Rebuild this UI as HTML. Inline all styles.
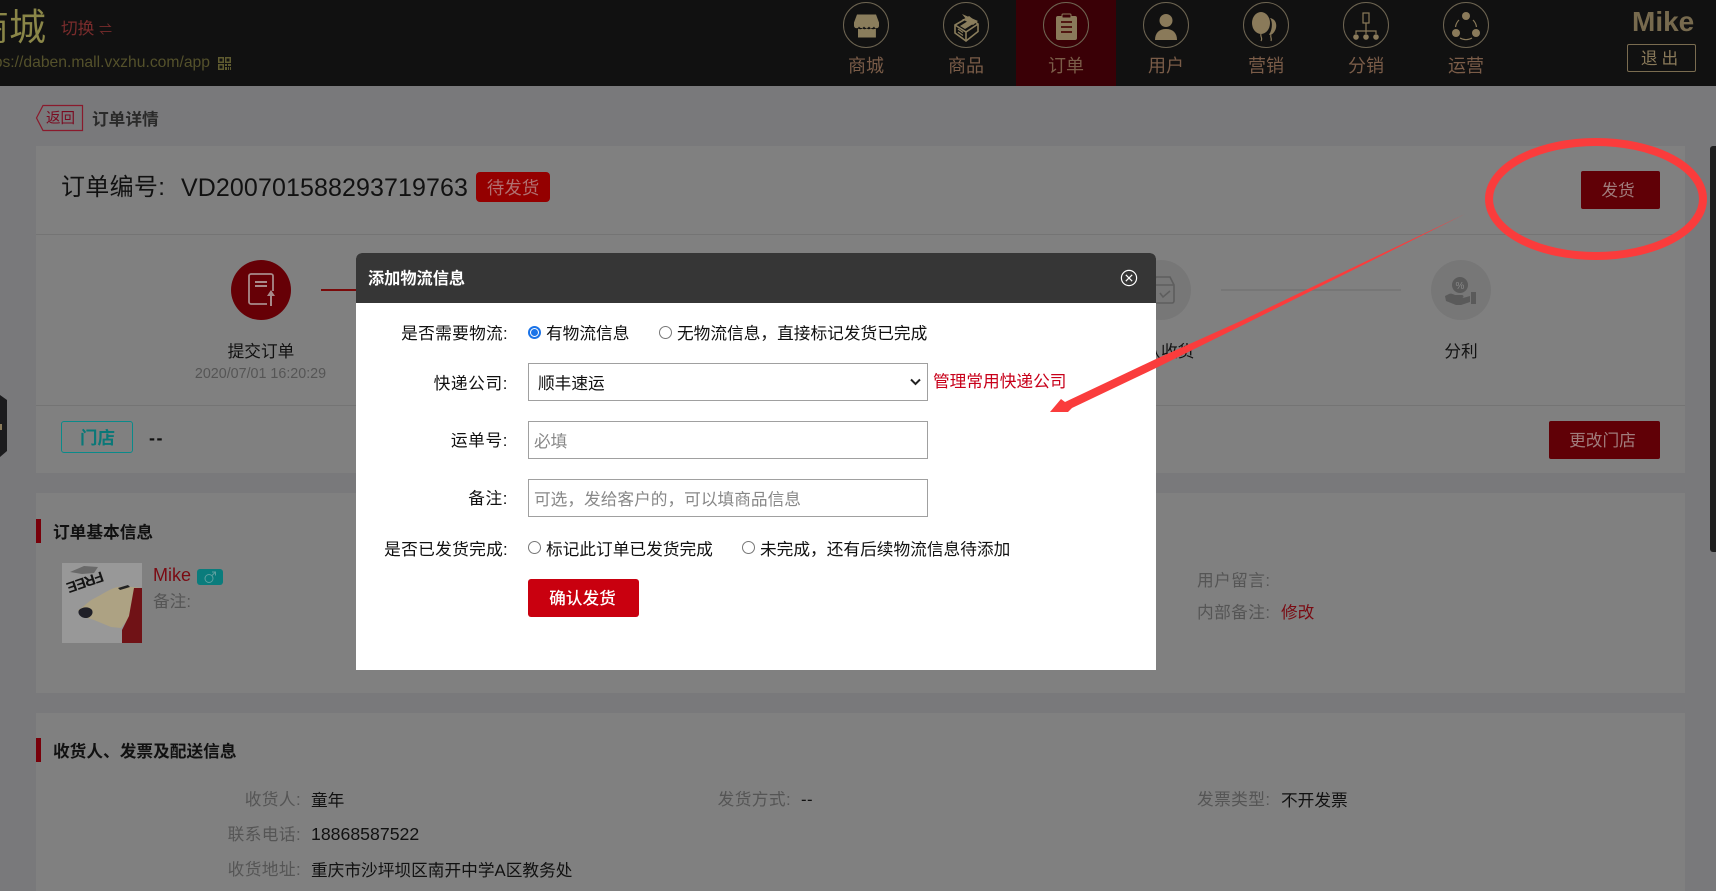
<!DOCTYPE html>
<html lang="zh-CN">
<head>
<meta charset="utf-8">
<title>订单详情</title>
<style>
html,body{margin:0;padding:0;width:1716px;height:891px;overflow:hidden;background:#79797b}
body{position:relative;font-family:"Liberation Sans","Noto Sans CJK SC",sans-serif;font-size:16.7px;color:#111}
.a{position:absolute}
.t{position:absolute;white-space:nowrap;height:24px;line-height:24px;margin-top:1px}
.c{transform:translateX(-50%);text-align:center}
.r{text-align:right}
.lab{color:#555;letter-spacing:.4px}
.nav{position:absolute;top:2px;width:46px;height:46px}
.navt{position:absolute;top:54px;width:100px;height:24px;line-height:24px;text-align:center;font-size:18px;color:#7a5c48}
.card{position:absolute;left:36px;width:1649px;background:#808080}
.btn{position:absolute;background:#600006;color:#a07c7c;border-radius:2px;text-align:center;text-indent:-5px}
.input{position:absolute;left:528px;width:398px;height:36px;border:1px solid #a0a0a0;background:#fff;box-sizing:content-box}
.radio{position:absolute;width:11px;height:11px;border:1px solid #777;border-radius:50%;background:#fff}
</style>
</head>
<body>

<!-- header -->
<div class="a" style="left:0;top:0;width:1716px;height:86px;background:#111"></div>
<div class="t" style="left:-1px;top:2px;height:50px;line-height:50px;font-size:37px;color:#8a8648;width:47px;overflow:hidden;direction:rtl">商城</div>
<div class="t" style="left:61px;top:16px;font-size:16.7px;color:#7a2c2c">切换 <span style="font-size:13px;letter-spacing:-1px">⇌</span></div>
<div class="t" style="right:1506px;top:50px;font-size:15.700px;color:#54512b">https://daben.mall.vxzhu.com/app</div>
<svg class="a" style="left:218px;top:57px" width="13" height="13" viewBox="0 0 13 13" fill="#5f5b30"><path d="M0 0h6v6H0zM1.500 1.500v3h3v-3zM7 0h6v6H7zM8.500 1.500v3h3v-3zM0 7h6v6H0zM1.500 8.500v3h3v-3zM7 7h2v2H7zM10 7h3v2h-3zM7 10h2v3H7zM10 10h1v3h-1zM12 10h1v3h-1z" fill-rule="evenodd"/></svg>

<div class="a" style="left:1016px;top:0;width:100px;height:86px;background:#3a0006"></div>

<svg class="nav" style="left:843px" viewBox="0 0 46 46"><circle cx="23" cy="23" r="22.500" fill="none" stroke="#6e6552"/><g fill="#8a7d5c"><path d="M14 12.500h19l3 8v3.500a2.600 2.600 0 0 1-5 .5 2.800 2.800 0 0 1-5 0 2.800 2.800 0 0 1-5 0 2.800 2.800 0 0 1-5 0 2.600 2.600 0 0 1-5-.5v-3.500z"/><path d="M15 26.500c1.500 1 3.500 1 4.500-.2 1.200 1.300 3 1.300 4.200 0 1.200 1.300 3 1.300 4.200 0 1 1.200 3 1.200 5 .2V35.500H15z"/></g></svg>
<svg class="nav" style="left:943px" viewBox="0 0 46 46"><circle cx="23" cy="23" r="22.500" fill="none" stroke="#6e6552"/><g fill="none" stroke="#8a7d5c" stroke-width="1.600"><path d="M12 23l14-8 9 7v7.500L23 39l-11-8z"/><path d="M12 23l11 7 12-8M23 30v9"/><path d="M15 27l5 3.500M15 30l5 3.500M15 33l5 3.500" stroke-width="1.200"/></g><path d="M19 12l16 7-5 4-11-6 4 0z" fill="#8a7d5c"/><path d="M17 24l8-5 5 3-8 5z" fill="#8a7d5c"/></svg>
<svg class="nav" style="left:1043px" viewBox="0 0 46 46"><circle cx="23" cy="23" r="22.500" fill="none" stroke="#6e6552"/><rect x="13" y="14" width="21" height="24" rx="2" fill="#8a7a5a"/><rect x="19" y="12" width="9" height="4" rx="1" fill="#3a0006" stroke="#8a7a5a"/><path d="M18 20h11M18 25h11M18 30h11" stroke="#4a0a08" stroke-width="1.800"/></svg>
<svg class="nav" style="left:1143px" viewBox="0 0 46 46"><circle cx="23" cy="23" r="22.500" fill="none" stroke="#6e6552"/><g fill="#8a7a5a"><ellipse cx="23" cy="18.500" rx="6.500" ry="6.500"/><path d="M12 38c0-7 4-11 11-11s11 4 11 11z"/></g></svg>
<svg class="nav" style="left:1243px" viewBox="0 0 46 46"><circle cx="23" cy="23" r="22.500" fill="none" stroke="#6e6552"/><g fill="#8a7a5a"><ellipse cx="18" cy="21" rx="9" ry="11"/><path d="M27 16c5 1 7 5 6 10-1 4-4 7-6 7-1 0-1-1 0-2 2-4 3-11 0-15z"/></g><path d="M18 32c-1 3 2 4 0 7M28 33c-1 2 1 3 0 6" fill="none" stroke="#8a7a5a" stroke-width="1.200"/></svg>
<svg class="nav" style="left:1343px" viewBox="0 0 46 46"><circle cx="23" cy="23" r="22.500" fill="none" stroke="#6e6552"/><g fill="none" stroke="#8a7a5a" stroke-width="1.200"><rect x="20" y="11" width="6" height="10"/><path d="M23 21v6M13 32v-3h20v3M23 27v5"/></g><g fill="#8a7a5a"><circle cx="13" cy="35" r="2.800"/><circle cx="23" cy="35" r="2.800"/><circle cx="33" cy="35" r="2.800"/></g></svg>
<svg class="nav" style="left:1443px" viewBox="0 0 46 46"><circle cx="23" cy="23" r="22.500" fill="none" stroke="#6e6552"/><g fill="#8a7a5a"><circle cx="23" cy="14" r="4"/><circle cx="13" cy="31" r="4"/><circle cx="33" cy="31" r="4"/></g><path d="M16 18a12 12 0 0 0-3.500 7M30 18a12 12 0 0 1 3.500 7M17 36a12 12 0 0 0 12 0" fill="none" stroke="#8a7a5a" stroke-width="1.200"/></svg>

<div class="navt" style="left:816px">商城</div>
<div class="navt" style="left:916px">商品</div>
<div class="navt" style="left:1016px">订单</div>
<div class="navt" style="left:1116px">用户</div>
<div class="navt" style="left:1216px">营销</div>
<div class="navt" style="left:1316px">分销</div>
<div class="navt" style="left:1416px">运营</div>

<div class="t" style="left:1632px;top:6px;height:30px;line-height:30px;font-size:28px;font-weight:bold;color:#776a4e">Mike</div>
<div class="a" style="left:1627px;top:44px;width:67px;height:26px;border:1px solid #7a6c50;border-radius:2px;text-align:center;line-height:27px;color:#8a7a5a;font-size:16.7px;letter-spacing:4px">退出</div>

<!-- page header -->
<svg class="a" style="left:35px;top:104px" width="50" height="28" viewBox="0 0 50 28"><path d="M8 1.500H47.500V26.500H8L1.500 14z" fill="none" stroke="#8a1a2c" stroke-width="1.200"/></svg>
<div class="t" style="left:46px;top:106px;font-size:14.500px;color:#7a0a20">返回</div>
<div class="t" style="left:92px;top:107px;font-size:16.700px;font-weight:bold;color:#2a2a2a">订单详情</div>

<!-- card 1 -->
<div class="card" style="top:146px;height:327px"></div>
<div class="a" style="left:36px;top:234px;width:1649px;height:1px;background:#747474"></div>
<div class="a" style="left:36px;top:405px;width:1649px;height:1px;background:#747474"></div>
<div class="t" style="left:61px;top:172px;height:30px;line-height:30px;font-size:24px;letter-spacing:.3px;color:#111">订单编号:</div>
<div class="t" style="left:181px;top:172px;height:30px;line-height:30px;font-size:25px;letter-spacing:.1px;color:#111">VD200701588293719763</div>
<div class="a" style="left:476px;top:172px;width:74px;height:30px;line-height:32px;background:#940000;border-radius:4px;text-align:center;font-size:17.500px;color:#b07070">待发货</div>
<div class="btn" style="left:1581px;top:171px;width:79px;height:38px;line-height:40px;font-size:16.700px">发货</div>
<div class="btn" style="left:1549px;top:421px;width:111px;height:38px;line-height:40px;font-size:16.700px;text-indent:-4px">更改门店</div>

<!-- steps -->
<div class="a" style="left:231px;top:260px;width:60px;height:60px;border-radius:50%;background:#660006"></div>
<svg class="a" style="left:247px;top:273px" width="30" height="34" viewBox="0 0 30 34" fill="none" stroke="#a88a8a" stroke-width="1.800"><path d="M26 18V3a2 2 0 0 0-2-2H4a2 2 0 0 0-2 2v26a2 2 0 0 0 2 2h16"/><path d="M8 9h12M8 13h12" stroke-width="2"/><path d="M24 33V21" stroke-width="2"/><path d="M24 17l-4 6h8z" fill="#a88a8a" stroke="none"/></svg>
<div class="a" style="left:321px;top:289px;width:37px;height:2px;background:#7a0a0a"></div>
<div class="t c" style="left:261px;top:339px">提交订单</div>
<div class="t c" style="left:260.500px;top:361px;font-size:14.300px;color:#555">2020/07/01 16:20:29</div>

<div class="a" style="left:1131px;top:260px;width:60px;height:60px;border-radius:50%;background:#777"></div>
<svg class="a" style="left:1150px;top:275px" width="26" height="30" viewBox="0 0 26 30" fill="none" stroke="#5e5e5e" stroke-width="1.600"><path d="M2 10l4-8h14l4 8v16a2 2 0 0 1-2 2H4a2 2 0 0 1-2-2zM2 10h22"/><path d="M10 18l3 4 7-6" stroke-width="1.600"/></svg>
<div class="a" style="left:1221px;top:289px;width:180px;height:2px;background:#767676"></div>
<div class="t c" style="left:1161px;top:339px">确认收货</div>
<div class="a" style="left:1431px;top:260px;width:60px;height:60px;border-radius:50%;background:#777"></div>
<svg class="a" style="left:1444px;top:276px" width="34" height="30" viewBox="0 0 34 30"><circle cx="16" cy="9" r="8" fill="#5a5a5a"/><text x="16" y="13" font-size="10" text-anchor="middle" fill="#888" font-family="Liberation Sans">%</text><path d="M1 20l4-2c2-1 4 0 6 1h7c2 0 2 3 0 3h-6 7l7-2v6l-9 3H12L2 25z" fill="#5a5a5a"/><rect x="27" y="16" width="5" height="12" fill="#5a5a5a"/></svg>
<div class="t c" style="left:1461px;top:339px">分利</div>

<div class="a" style="left:61px;top:421px;width:70px;height:30px;border:1px solid #0a8a8a;border-radius:3px"></div>
<div class="t" style="left:80px;top:425px;font-size:17.500px;font-weight:bold;color:#0a7878">门店</div>
<div class="t" style="left:149px;top:425px;font-size:18px;color:#111;letter-spacing:1.500px;font-weight:bold">--</div>

<!-- card 2 -->
<div class="card" style="top:493px;height:200px"></div>
<div class="a" style="left:36px;top:519px;width:5px;height:24px;background:#78000a"></div>
<div class="t" style="left:53px;top:520px;font-weight:bold">订单基本信息</div>
<svg class="a" style="left:62px;top:563px" width="80" height="80" viewBox="0 0 80 80">
<rect width="80" height="80" fill="#989898"/>
<text transform="translate(23 19) rotate(161)" x="0" y="5" text-anchor="middle" font-family="Liberation Sans" font-size="15" font-weight="bold" fill="#151515" textLength="38">FREE</text>
<path d="M8 9l14-6 14 1-4 6-12 1z" fill="#444" opacity=".55"/>
<path d="M16 47c5-2 10-9 17-12 8-4 16-10 23-11 8-1 14 0 23 1v15L59 65l-10-1-17-7-12-4z" fill="#ada283"/>
<path d="M17 47c3-3 10-4 13 0 2 4-2 8-6 8-5 0-9-4-7-8z" fill="#202028"/>
<path d="M56 25l10-3 2 2-10 3z" fill="#222"/>
<path d="M72 25h8v55H60V67l7-14z" fill="#701216"/>
</svg>
<div class="t" style="left:153px;top:562px;font-size:18px;color:#7a0a12">Mike</div>
<div class="a" style="left:197px;top:569px;width:26px;height:16px;background:#0a7c7c;border-radius:3px;overflow:hidden"><svg width="26" height="16" viewBox="0 0 26 16" fill="none" stroke="#5fa0a0" stroke-width="1"><circle cx="12" cy="9.500" r="4"/><path d="M15 6.500l3.500-3.500M15 3h3.500v3.500"/></svg></div>
<div class="t" style="left:153px;top:589px;color:#555">备注:</div>
<div class="t lab" style="left:1197px;top:568px">用户留言:</div>
<div class="t lab" style="left:1197px;top:600px">内部备注:</div>
<div class="t" style="left:1281px;top:600px;color:#7a0a12">修改</div>

<!-- card 3 -->
<div class="card" style="top:713px;height:178px"></div>
<div class="a" style="left:36px;top:738px;width:5px;height:24px;background:#78000a"></div>
<div class="t" style="left:53px;top:739px;font-weight:bold">收货人、发票及配送信息</div>
<div class="t lab" style="right:1415px;top:787px">收货人:</div>
<div class="t" style="left:311px;top:788px">童年</div>
<div class="t lab" style="right:1415px;top:822px">联系电话:</div>
<div class="t" style="left:311px;top:821px;font-size:17.700px">18868587522</div>
<div class="t lab" style="right:1415px;top:857px">收货地址:</div>
<div class="t" style="left:311px;top:858px">重庆市沙坪坝区南开中学A区教务处</div>
<div class="t lab" style="right:925px;top:787px">发货方式:</div>
<div class="t" style="left:801px;top:787px;letter-spacing:.5px">--</div>
<div class="t lab" style="left:1197px;top:787px">发票类型:</div>
<div class="t" style="left:1281px;top:788px">不开发票</div>

<!-- side handle & scrollbar -->
<svg class="a" style="left:0;top:395px" width="8" height="62" viewBox="0 0 8 62"><path d="M0 0l7 5v51l-7 6z" fill="#1c1c1e"/><rect x="0" y="29" width="2" height="6" fill="#8a7a5a"/></svg>
<div class="a" style="left:1710px;top:146px;width:6px;height:406px;background:#1f1f1f;border-radius:3px 0 0 3px"></div>

<!-- modal -->
<div class="a" style="left:356px;top:253px;width:800px;height:417px;background:#fff;border-radius:6px 6px 0 0"></div>
<div class="a" style="left:356px;top:253px;width:800px;height:50px;background:#363636;border-radius:6px 6px 0 0"></div>
<div class="t" style="left:368px;top:266px;font-size:16.200px;font-weight:bold;color:#fff">添加物流信息</div>
<svg class="a" style="left:1120px;top:269px" width="18" height="18" viewBox="0 0 18 18" fill="none" stroke="#fff" stroke-width="1.200"><circle cx="9" cy="9" r="7.600"/><path d="M5.800 5.800l6.400 6.400M12.200 5.800l-6.400 6.400"/></svg>

<div class="t r" style="right:1208px;top:321px;letter-spacing:.3px">是否需要物流:</div>
<div class="a" style="left:528px;top:326px;width:9px;height:9px;border:2px solid #1a73e8;border-radius:50%"></div>
<div class="a" style="left:531px;top:329px;width:7px;height:7px;background:#1a73e8;border-radius:50%"></div>
<div class="t" style="left:546px;top:321px">有物流信息</div>
<div class="radio" style="left:659px;top:326px"></div>
<div class="t" style="left:677px;top:321px">无物流信息，直接标记发货已完成</div>

<div class="t r" style="right:1208px;top:371px;letter-spacing:.6px">快递公司:</div>
<div class="input" style="top:363px"></div>
<div class="t" style="left:538px;top:371px">顺丰速运</div>
<svg class="a" style="left:910px;top:378px" width="11" height="8" viewBox="0 0 11 8" fill="none" stroke="#222" stroke-width="2"><path d="M1 1.500l4.500 4.500L10 1.500"/></svg>
<div class="t" style="left:933px;top:369px;color:#c8001a">管理常用快递公司</div>

<div class="t r" style="right:1208px;top:428px;letter-spacing:.6px">运单号:</div>
<div class="input" style="top:421px"></div>
<div class="t" style="left:534px;top:429px;color:#888">必填</div>

<div class="t r" style="right:1208px;top:486px;letter-spacing:.6px">备注:</div>
<div class="input" style="top:479px"></div>
<div class="t" style="left:534px;top:487px;color:#888">可选，发给客户的，可以填商品信息</div>

<div class="t r" style="right:1208px;top:537px;letter-spacing:.3px">是否已发货完成:</div>
<div class="radio" style="left:528px;top:541px"></div>
<div class="t" style="left:546px;top:537px">标记此订单已发货完成</div>
<div class="radio" style="left:742px;top:541px"></div>
<div class="t" style="left:760px;top:537px">未完成，还有后续物流信息待添加</div>

<div class="a" style="left:528px;top:579px;width:111px;height:38px;line-height:40px;background:#c9000f;border-radius:3px;color:#fff;text-align:center;font-size:16.700px;font-weight:500;text-indent:-2px">确认发货</div>

<!-- annotation -->
<svg class="a" style="left:0;top:0;pointer-events:none" width="1716" height="891" viewBox="0 0 1716 891">
<ellipse cx="1596" cy="199" rx="107" ry="57" fill="none" stroke="#fa3c3c" stroke-width="8"/>
<polygon points="1465,214 1243,320 1156,359 1065,402 1061,399 1050,412 1068,412 1072,408 1156,368 1249,322" fill="#fa3c3c"/>
</svg>
</body>
</html>
